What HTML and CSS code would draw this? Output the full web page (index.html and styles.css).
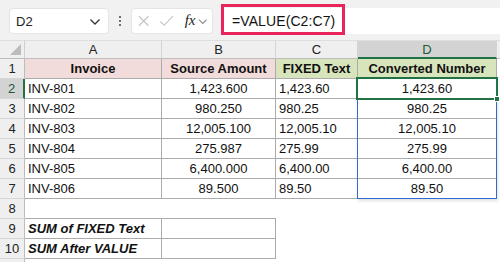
FILE: index.html
```html
<!DOCTYPE html>
<html>
<head>
<meta charset="utf-8">
<link rel="stylesheet" href="styles.css">
</head>
<body>
<div class="app">
  <div class="toolbar">
    <div class="namebox">
      <span class="ref">D2</span>
      <svg class="chev" width="12" height="8" viewBox="0 0 12 8"><path d="M1.5 1.5 L6 6 L10.5 1.5" fill="none" stroke="#333" stroke-width="1.3"/></svg>
    </div>
    <div class="dots"><i></i><i></i><i></i></div>
    <div class="fxbox">
      <svg class="ico" width="14" height="14" viewBox="0 0 14 14"><path d="M2 2 L12 12 M12 2 L2 12" stroke="#c4c4c4" stroke-width="1.2" fill="none"/></svg>
      <svg class="ico" width="16" height="14" viewBox="0 0 16 14"><path d="M1.5 7.5 L5.5 11.5 L14.5 2" stroke="#c4c4c4" stroke-width="1.2" fill="none"/></svg>
      <span class="fx">fx</span>
      <svg class="chev2" width="10" height="7" viewBox="0 0 10 7"><path d="M1 1.5 L5 5.5 L9 1.5" fill="none" stroke="#8a8a8a" stroke-width="1.1"/></svg>
    </div>
    <div class="formula">
      <span class="ftext">=VALUE(C2:C7)</span>
      <div class="hilite"></div>
    </div>
  </div>
  <div class="sheet">
    <div class="corner"><span class="tri"></span></div>
    <div class="ch">A</div>
    <div class="ch">B</div>
    <div class="ch">C</div>
    <div class="ch sel">D</div>
    <div class="ch last"></div>

    <div class="rh">1</div>
    <div class="c b pink ctr">Invoice</div>
    <div class="c b pink ctr">Source Amount</div>
    <div class="c b green ctr">FIXED Text</div>
    <div class="c b green ctr">Converted Number</div>
    <div class="e"></div>

    <div class="rh sel">2</div>
    <div class="c">INV-801</div>
    <div class="c ctr">1,423.600</div>
    <div class="c">1,423.60</div>
    <div class="c ctr">1,423.60</div>
    <div class="e"></div>

    <div class="rh">3</div>
    <div class="c">INV-802</div>
    <div class="c ctr">980.250</div>
    <div class="c">980.25</div>
    <div class="c ctr">980.25</div>
    <div class="e"></div>

    <div class="rh">4</div>
    <div class="c">INV-803</div>
    <div class="c ctr">12,005.100</div>
    <div class="c">12,005.10</div>
    <div class="c ctr">12,005.10</div>
    <div class="e"></div>

    <div class="rh">5</div>
    <div class="c">INV-804</div>
    <div class="c ctr">275.987</div>
    <div class="c">275.99</div>
    <div class="c ctr">275.99</div>
    <div class="e"></div>

    <div class="rh">6</div>
    <div class="c">INV-805</div>
    <div class="c ctr">6,400.000</div>
    <div class="c">6,400.00</div>
    <div class="c ctr">6,400.00</div>
    <div class="e"></div>

    <div class="rh">7</div>
    <div class="c">INV-806</div>
    <div class="c ctr">89.500</div>
    <div class="c">89.50</div>
    <div class="c ctr">89.50</div>
    <div class="e"></div>

    <div class="rh">8</div>
    <div class="n bb"></div>
    <div class="n bb"></div>
    <div class="n"></div>
    <div class="n"></div>
    <div class="e"></div>

    <div class="rh">9</div>
    <div class="c bi">SUM of FIXED Text</div>
    <div class="c"></div>
    <div class="n"></div>
    <div class="n"></div>
    <div class="e"></div>

    <div class="rh">10</div>
    <div class="c bi">SUM After VALUE</div>
    <div class="c"></div>
    <div class="n"></div>
    <div class="n"></div>
    <div class="e"></div>

    <div class="rh"></div>
    <div class="n"></div>
    <div class="n"></div>
    <div class="n"></div>
    <div class="n"></div>
    <div class="e"></div>

    <div class="range"></div>
    <div class="active"><span class="handle"></span></div>
  </div>
</div>
</body>
</html>
```

FILE: styles.css
```css
* { box-sizing: border-box; }
html, body { margin: 0; padding: 0; }
body {
  width: 500px;
  height: 262px;
  overflow: hidden;
  background: #ffffff;
  font-family: "Liberation Sans", Arial, sans-serif;
}
.app { width: 500px; height: 262px; overflow: hidden; }

.toolbar {
  height: 40px;
  background: #f1f1f1;
  display: flex;
  align-items: flex-start;
  padding: 8px 0 0 9px;
}
.namebox {
  width: 100px;
  height: 26px;
  background: #fff;
  border-radius: 4px;
  border: 1px solid #e4e4e4;
  display: flex;
  align-items: center;
  justify-content: space-between;
  padding: 0 7px 0 6px;
  font-size: 13px;
  color: #222;
}
.namebox .chev { margin-top: 1px; }
.dots {
  width: 22px;
  height: 26px;
  display: flex;
  flex-direction: column;
  align-items: center;
  justify-content: center;
  gap: 2px;
}
.dots i { width: 2px; height: 2px; background: #444; display: block; border-radius: 1px; }
.fxbox {
  width: 82px;
  height: 26px;
  background: #fff;
  border-radius: 4px;
  border: 1px solid #e4e4e4;
  display: flex;
  align-items: center;
  padding: 0 4px 0 5px;
}
.fxbox .ico { margin-right: 10px; }
.fxbox .ico:first-child { margin-right: 9px; }
.fx {
  font-family: "Liberation Serif", "Times New Roman", serif;
  font-style: italic;
  font-size: 15px;
  color: #222;
  margin-right: 3px;
  margin-top: -2px;
}
.chev2 { margin-top: 1px; }
.formula {
  position: relative;
  margin-left: 9px;
  flex: 1;
  height: 26px;
  background: #fff;
  display: flex;
  align-items: center;
  padding-left: 10px;
  font-size: 14px;
  color: #111;
}
.ftext { letter-spacing: 0.1px; }
.hilite {
  position: absolute;
  left: -1px;
  top: -4px;
  width: 124px;
  height: 31px;
  border: 3px solid #e8245a;
}

.sheet {
  position: relative;
  display: grid;
  grid-template-columns: 25px 137px 114px 82px 139px 3px;
  grid-template-rows: 19px repeat(11, 20px);
  font-size: 13px;
  color: #111;
}
.corner {
  background: #efefef;
  border-right: 1px solid #cfcfcf;
  border-bottom: 1px solid #bdbdbd;
  border-top: 1px solid #dedede;
  position: relative;
}
.tri {
  position: absolute;
  right: 3px;
  bottom: 3px;
  width: 0;
  height: 0;
  border-left: 11px solid transparent;
  border-bottom: 11px solid #bcbcbc;
}
.ch {
  background: #efefef;
  border-right: 1px solid #d4d4d4;
  border-bottom: 1px solid #bdbdbd;
  border-top: 1px solid #dedede;
  display: flex;
  align-items: center;
  justify-content: center;
  color: #222;
}
.ch.sel {
  background: #d3d3d3;
  border-bottom: 2px solid #217346;
  color: #1a5c36;
}
.ch.last { border-right: none; }
.rh {
  background: #efefef;
  border-right: 1px solid #bdbdbd;
  border-bottom: 1px solid #d6d6d6;
  display: flex;
  align-items: center;
  justify-content: center;
  color: #222;
}
.rh.sel {
  background: #d3d3d3;
  border-right: 2px solid #217346;
  color: #1a5c36;
}
.c {
  border-right: 1px solid #ababab;
  border-bottom: 1px solid #ababab;
  display: flex;
  align-items: center;
  padding: 0 3px;
  white-space: nowrap;
  overflow: hidden;
}
.n.bb { border-bottom: 1px solid #ababab; }
.ctr { justify-content: center; }
.b { font-weight: bold; }
.bi { font-weight: bold; font-style: italic; }
.pink { background: #f2dcdb; }
.green { background: #d8e4bc; }

.range {
  position: absolute;
  grid-column: 5 / 6;
  grid-row: 3 / 9;
  top: -1px;
  left: -1px;
  right: 0;
  bottom: 0;
  border: 1px solid #2f6bd0;
  box-shadow: 1px 2px 3px rgba(0,0,0,0.12);
  pointer-events: none;
}
.active {
  position: absolute;
  grid-column: 5 / 6;
  grid-row: 3 / 4;
  top: -2px;
  left: -2px;
  right: -1px;
  bottom: -1px;
  border: 2px solid #217346;
  pointer-events: none;
}
.handle {
  position: absolute;
  right: -4px;
  bottom: -4px;
  width: 6px;
  height: 6px;
  background: #217346;
  border: 1px solid #fff;
}
```
